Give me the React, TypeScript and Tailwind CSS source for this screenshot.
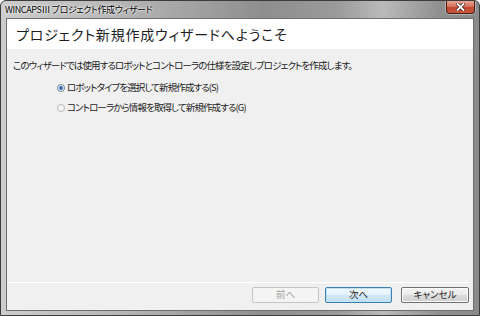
import React from "react";

const jp = "font-['Noto_Sans_CJK_JP','Noto_Sans',sans-serif] [font-feature-settings:'palt']";

function Radio({ checked }: { checked: boolean }) {
  return (
    <svg width="8" height="8" viewBox="0 0 8 8" className="shrink-0">
      <circle cx="4" cy="4" r="3.5" fill={checked ? "#f4f7fa" : "#f4f4f4"} stroke={checked ? "#6d7f92" : "#b9b9b9"} strokeWidth="1" />
      {checked && <circle cx="4" cy="4" r="1.9" fill="#2c69b3" />}
    </svg>
  );
}

export default function App() {
  return (
    <div className={`w-[480px] h-[316px] flex flex-col border border-[#3c3c3c] rounded-t-[6px] overflow-hidden bg-[linear-gradient(to_right,#cdcdcd_0%,#b6b6b6_25%,#8e8e8e_55%,#9a9a9a_70%,#bababa_80%,#8f8f8f_92%,#8a8a8a_100%)] ${jp}`}>
      {/* Title bar */}
      <div className="h-[17px] flex items-start shrink-0">
        <div className="h-[16px] flex items-center pl-[4px] text-[9px] tracking-[-0.4px] text-black leading-none [text-shadow:0_0_3px_#ffffff,0_0_2px_#ffffff]">
          WINCAPSⅢ プロジェクト作成ウィザード
        </div>
        <div className="ml-auto mr-[4px] w-[29px] h-[13px] rounded-b-[4px] border border-t-0 border-[#4a1d14] bg-[linear-gradient(to_bottom,#e9a696_0%,#d6725c_45%,#c1452c_55%,#c95a3f_100%)] flex items-center justify-center shadow-[0_0_0_1px_rgba(255,255,255,0.35)]">
          <svg width="9" height="8" viewBox="0 0 9 8">
            <path d="M1.5 1 L7.5 7 M7.5 1 L1.5 7" stroke="#3b1a14" strokeWidth="3.2" strokeLinecap="square" />
            <path d="M1.5 1 L7.5 7 M7.5 1 L1.5 7" stroke="#ffffff" strokeWidth="1.8" strokeLinecap="square" />
          </svg>
        </div>
      </div>

      {/* Client area */}
      <div className="ml-[5px] mr-[5px] h-[293px] shrink-0 border border-[#6e6e6e] flex flex-col bg-[#f0f0f0]">
        {/* Header */}
        <div className="h-[30px] bg-white flex items-center pl-[9px] shrink-0">
          <span className="text-[14px] text-[#1e1e1e] leading-none tracking-[0.8px]">プロジェクト新規作成ウィザードへようこそ</span>
        </div>

        {/* Body */}
        <div className="h-[233px] shrink-0 flex flex-col pl-[6px] text-[9.5px] tracking-[-0.9px] text-[#1a1a1a] leading-none">
          <div className="h-[14px] mt-[10px] flex items-center">このウィザードでは使用するロボットとコントローラの仕様を設定しプロジェクトを作成します。</div>
          <div className="flex flex-col pl-[44px] mt-[8px] gap-[6px]">
            <div className="h-[14px] flex items-center gap-[2px]">
              <Radio checked />
              <span>ロボットタイプを選択して新規作成する(S)</span>
            </div>
            <div className="h-[14px] flex items-center gap-[2px]">
              <Radio checked={false} />
              <span>コントローラから情報を取得して新規作成する(G)</span>
            </div>
          </div>
        </div>

        {/* Separator */}
        <div className="h-px bg-white shrink-0" />

        {/* Footer */}
        <div className="flex-1 flex items-start pt-[4px] pr-[4px] text-[9.5px] leading-none">
          <div className="ml-auto w-[67px] h-[16px] rounded-[2px] border border-[#c6c6c6] bg-[#f4f4f4] text-[#a3a3a3] flex items-center justify-center">前へ</div>
          <div className="ml-[6px] w-[67px] h-[16px] rounded-[2px] border border-[#3c7fb1] bg-[linear-gradient(to_bottom,#f2f9fd_0%,#e4f2fb_50%,#d1e8f7_51%,#c3e0f4_100%)] shadow-[inset_0_0_0_1px_#bfe4f8] text-[#1a1a1a] flex items-center justify-center">次へ</div>
          <div className="ml-[9px] w-[68px] h-[16px] rounded-[2px] border border-[#707070] bg-[linear-gradient(to_bottom,#f2f2f2_0%,#ebebeb_50%,#dddddd_51%,#cfcfcf_100%)] shadow-[inset_0_0_0_1px_#fcfcfc] text-[#1a1a1a] flex items-center justify-center">キャンセル</div>
        </div>
      </div>
    </div>
  );
}
